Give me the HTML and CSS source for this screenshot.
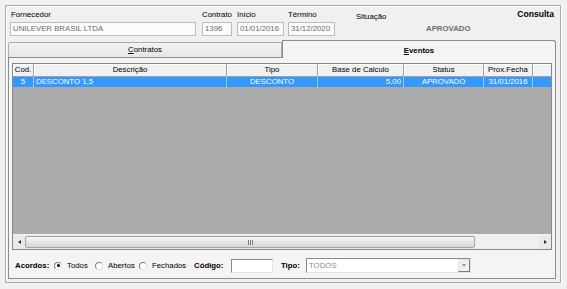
FILE: index.html
```html
<!DOCTYPE html>
<html lang="pt">
<head>
<meta charset="utf-8">
<title>Consulta</title>
<link rel="stylesheet" href="styles.css">
</head>
<body>
<div class="frame">
  <div class="top">
    <div class="field f-forn"><label>Fornecedor</label><div class="input">UNILEVER BRASIL LTDA</div></div>
    <div class="field f-contr"><label>Contrato</label><div class="input">1396</div></div>
    <div class="field f-ini"><label>Início</label><div class="input">01/01/2016</div></div>
    <div class="field f-term"><label>Término</label><div class="input">31/12/2020</div></div>
    <div class="situacao">
      <div class="sit-label">Situação</div>
      <div class="sit-value">APROVADO</div>
    </div>
    <div class="consulta">Consulta</div>
  </div>
  <div class="tabs">
    <div class="tab"><u>C</u>ontratos</div>
    <div class="tab active"><u>E</u>ventos</div>
  </div>
  <div class="panel">
    <div class="grid">
      <div class="ghead">
        <div class="c c-cod">Cod.</div>
        <div class="c c-desc">Descrição</div>
        <div class="c c-tipo">Tipo</div>
        <div class="c c-base">Base de Calculo</div>
        <div class="c c-status">Status</div>
        <div class="c c-prox">Prox.Fecha</div>
        <div class="c c-fill"></div>
      </div>
      <div class="grow sel">
        <div class="c c-cod">5</div>
        <div class="c c-desc left">DESCONTO 1,5</div>
        <div class="c c-tipo">DESCONTO</div>
        <div class="c c-base right">5,00</div>
        <div class="c c-status">APROVADO</div>
        <div class="c c-prox">31/01/2016</div>
        <div class="c c-fill"></div>
      </div>
      <div class="gbody"></div>
      <div class="hscroll">
        <div class="arrow"><span class="tri-left"></span></div>
        <div class="thumb"><span class="grip"><i></i><i></i><i></i></span></div>
        <div class="track"></div>
        <div class="arrow"><span class="tri-right"></span></div>
      </div>
    </div>
    <div class="filters">
      <span class="b lbl-acordos">Acordos:</span>
      <span class="radio checked"></span><span class="rtxt r-todos">Todos</span>
      <span class="radio"></span><span class="rtxt r-abertos">Abertos</span>
      <span class="radio"></span><span class="rtxt r-fechados">Fechados</span>
      <span class="b lbl-codigo">Código:</span>
      <span class="code-input"></span>
      <span class="b lbl-tipo">Tipo:</span>
      <span class="select"><span class="sel-text">TODOS</span><span class="sel-btn"><span class="tri-down"></span></span></span>
    </div>
  </div>
</div>
</body>
</html>
```
FILE: styles.css
```css
body {
  margin: 0;
  background: #f0f0f0;
  font-family: "Liberation Sans", Arial, sans-serif;
  font-size: 7.8px;
  color: #000;
}

.frame {
  margin: 5px 0 0 5px;
  width: 556px;
  height: 278px;
  box-sizing: border-box;
  border: 1px solid #a9a9a9;
  box-shadow: inset 1px 1px 0 #fff, 1px 1px 0 #fff;
}

/* top fields */
.top {
  display: flex;
  height: 34px;
  box-sizing: border-box;
  padding-top: 3px;
}
.field {
  display: flex;
  flex-direction: column;
}
.field label {
  height: 13px;
  line-height: 11px;
}
.input {
  height: 14px;
  box-sizing: border-box;
  border: 1px solid #bcbcbc;
  background: #fbfbfb;
  color: #6d6d6d;
  line-height: 10px;
  padding: 1px 0 0 2px;
  white-space: nowrap;
  overflow: hidden;
}
.f-forn { margin-left: 4px; width: 186px; }
.f-forn label { padding-left: 1px; }
.f-contr { margin-left: 6px; width: 30px; }
.f-ini { margin-left: 5px; width: 47px; }
.f-term { margin-left: 4px; width: 47px; }

.situacao {
  margin-left: 21px;
  padding-top: 2px;
}
.sit-label { line-height: 11px; }
.sit-value {
  margin: 1px 0 0 70px;
  line-height: 11px;
  font-weight: bold;
  color: #6d6d6d;
}
.consulta {
  margin-left: auto;
  margin-right: 6px;
  font-weight: bold;
  font-size: 8.6px;
  line-height: 11px;
}

/* tabs */
.tabs {
  display: flex;
  align-items: flex-end;
  height: 17px;
  padding-left: 2px;
}
.tab {
  width: 274px;
  height: 15px;
  box-sizing: border-box;
  border: 1px solid #acacac;
  border-bottom: none;
  border-radius: 2px 0 0 0;
  background: linear-gradient(#f3f3f3, #e6e6e6);
  text-align: center;
  line-height: 14px;
}
.tab.active {
  height: 18px;
  margin-bottom: -1px;
  border-color: #898c95;
  border-radius: 0 3px 0 0;
  background: #f4f4f4;
  font-weight: bold;
  line-height: 12px;
  padding-top: 4px;
  position: relative;
  z-index: 1;
}

/* panel */
.panel {
  margin-left: 2px;
  width: 548px;
  height: 222px;
  box-sizing: border-box;
  border: 1px solid #898c95;
  background: #f4f4f4;
  padding: 5px 3px 0 3px;
}

/* grid */
.grid {
  width: 540px;
  height: 187px;
  box-sizing: border-box;
  border: 1px solid #828790;
  display: flex;
  flex-direction: column;
  background: #ababab;
}
.ghead, .grow {
  display: flex;
  flex: none;
}
.ghead .c {
  height: 13px;
  line-height: 12px;
  box-sizing: border-box;
  border-right: 1px solid #a0a0a0;
  border-bottom: 1px solid #a0a0a0;
  box-shadow: inset 1px 1px 0 #fff;
  background: #f0f0f0;
  text-align: center;
  white-space: nowrap;
}
.grow .c {
  height: 10px;
  line-height: 10px;
  box-sizing: border-box;
  text-align: center;
  white-space: nowrap;
}
.grow.sel .c {
  background: #3399ff;
  color: #fff;
  border-right: 1px solid #9ccbff;
}
.grow.sel .c-fill { border-right: none; }
.c.left { text-align: left; padding-left: 2px; }
.c.right { text-align: right; padding-right: 2px; }
.c-cod { width: 21px; }
.c-desc { width: 193px; }
.c-tipo { width: 91px; }
.c-base { width: 86px; }
.c-status { width: 80px; }
.c-prox { width: 49px; }
.c-fill { width: 18px; }
.ghead .c-fill { border-right: none; }

.gbody { flex: 1; }

.hscroll {
  height: 15px;
  flex: none;
  display: flex;
  background: #eaeaea;
  border-top: 1px solid #f4f4f4;
  box-sizing: border-box;
}
.arrow {
  width: 12px;
  display: flex;
  align-items: center;
  justify-content: center;
}
.tri-left {
  width: 0; height: 0;
  border-top: 2.5px solid transparent;
  border-bottom: 2.5px solid transparent;
  border-right: 3px solid #333;
}
.tri-right {
  width: 0; height: 0;
  border-top: 2.5px solid transparent;
  border-bottom: 2.5px solid transparent;
  border-left: 3px solid #333;
}
.thumb {
  width: 450px;
  margin: 1px 0;
  box-sizing: border-box;
  border: 1px solid #a3a3a3;
  border-radius: 2px;
  background: linear-gradient(#f6f6f6, #e6e6e6 50%, #d6d6d6);
  display: flex;
  align-items: center;
  justify-content: center;
}
.grip { display: flex; gap: 1px; }
.grip i {
  display: block;
  width: 1px;
  height: 5px;
  background: #7a7a7a;
}
.track { flex: 1; background: #f0f0f0; }

/* filters */
.filters {
  display: flex;
  align-items: center;
  height: 15px;
  margin-top: 8px;
  padding-left: 3px;
}
.b { font-weight: bold; font-size: 7.8px; white-space: nowrap; }
.radio {
  flex: none;
  width: 8px;
  height: 8px;
  box-sizing: border-box;
  border-radius: 50%;
  border: 1px solid;
  border-color: #7f7f7f #e2e2e2 #e2e2e2 #7f7f7f;
  background: #fff;
  margin-right: 5px;
  display: flex;
  align-items: center;
  justify-content: center;
}
.radio.checked::after {
  content: "";
  width: 3px;
  height: 3px;
  border-radius: 50%;
  background: #000;
}
.lbl-acordos { width: 39px; }
.rtxt { white-space: nowrap; }
.r-todos { width: 28px; }
.r-abertos { width: 31px; }
.r-fechados { width: 42px; }
.lbl-codigo { width: 37px; }
.code-input {
  width: 42px;
  height: 14px;
  box-sizing: border-box;
  border: 1px solid;
  border-color: #8a8a8a #e3e3e3 #e3e3e3 #8a8a8a;
  background: #fff;
}
.lbl-tipo { margin-left: 8px; width: 25px; }
.select {
  width: 165px;
  height: 15px;
  box-sizing: border-box;
  border: 1px solid;
  border-color: #8a8a8a #e3e3e3 #e3e3e3 #8a8a8a;
  background: #fff;
  display: flex;
  align-items: stretch;
}
.sel-text {
  flex: 1;
  color: #8c8c8c;
  line-height: 13px;
  padding-left: 2px;
}
.sel-btn {
  width: 12px;
  box-sizing: border-box;
  border: 1px solid;
  border-color: #e3e3e3 #7a7a7a #7a7a7a #e3e3e3;
  background: #f0f0f0;
  display: flex;
  align-items: center;
  justify-content: center;
}
.tri-down {
  width: 0; height: 0;
  border-left: 2.5px solid transparent;
  border-right: 2.5px solid transparent;
  border-top: 3px solid #9a9a9a;
}
```
